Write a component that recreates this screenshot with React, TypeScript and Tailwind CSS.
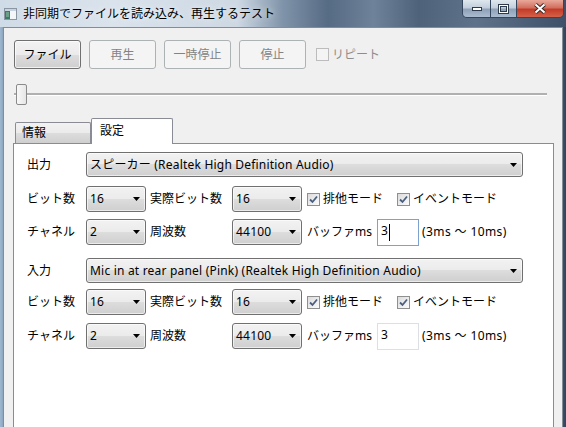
import React from "react";

function Arrow() {
  return (
    <svg width="7" height="4" viewBox="0 0 7 4">
      <path d="M0 0H7L3.5 4Z" fill="#000" />
    </svg>
  );
}

function Combo({ value, w, h = "h-[26px]" }: { value: string; w: string; h?: string }) {
  return (
    <div
      className={`${w} ${h} flex shrink-0 items-center justify-between rounded-[3px] border border-[#707070] bg-[linear-gradient(#f2f2f2,#ebebeb_50%,#dddddd_50%,#cfcfcf)] pl-[3px] pr-[5px] shadow-[inset_0_0_0_1px_rgba(255,255,255,0.6)]`}
    >
      <span className="whitespace-nowrap tracking-[0.2px]">{value}</span>
      <Arrow />
    </div>
  );
}

function Check({ label, checked, disabled }: { label: string; checked?: boolean; disabled?: boolean }) {
  return (
    <div className="flex items-center gap-[3px]">
      <div
        className={`flex h-[13px] w-[13px] items-center justify-center border ${
          disabled
            ? "border-[#bcbcbc] bg-[#f4f4f4]"
            : "border-[#8f8f8f] bg-[linear-gradient(135deg,#dcdcdc,#fbfbfb)]"
        }`}
      >
        {checked && (
          <svg width="11" height="11" viewBox="0 0 11 11">
            <path d="M2 5.5L4.5 8L9 2.5" fill="none" stroke="#4a5f80" strokeWidth="1.8" />
          </svg>
        )}
      </div>
      <span className={disabled ? "text-[#8d8d8d]" : ""}>{label}</span>
    </div>
  );
}

function Btn({ label, disabled }: { label: string; disabled?: boolean }) {
  return disabled ? (
    <div className="flex h-[29px] w-[67px] items-center justify-center rounded-[3px] border border-[#adb2b5] bg-[#f4f4f4] text-[#838383]">
      {label}
    </div>
  ) : (
    <div className="flex h-[29px] w-[67px] items-center justify-center rounded-[3px] border border-[#707070] bg-[linear-gradient(#f2f2f2,#ebebeb_50%,#dddddd_50%,#cfcfcf)] shadow-[inset_0_0_0_1px_rgba(255,255,255,0.7)]">
      {label}
    </div>
  );
}

function TextBox({ focused }: { focused?: boolean }) {
  return (
    <div
      className={`flex h-[27px] w-[42px] shrink-0 items-start border pl-[3px] pt-[3px] ${
        focused ? "border-[#7da2ce]" : "border-[#dcdfe3]"
      } bg-white`}
    >
      <span>3</span>
      {focused && <span className="ml-px mt-[1px] h-[17px] w-px bg-black" />}
    </div>
  );
}

function DeviceBlock({ title, device, top, rowB, rowC, focused }: { title: string; device: string; top: string; rowB: string; rowC: string; focused?: boolean }) {
  return (
    <>
      <div className={`${top} flex h-[25px] items-center`}>
        <span className="w-[59px]">{title}</span>
        <Combo value={device} w="w-[437px]" h="h-[25px]" />
      </div>
      <div className={`${rowB} flex h-[26px] items-center`}>
        <span className="w-[59px]">ビット数</span>
        <Combo value="16" w="w-[60px]" />
        <span className="ml-[4px] w-[82px]">実際ビット数</span>
        <Combo value="16" w="w-[70px]" />
        <div className="ml-[5px] w-[90px]">
          <Check label="排他モード" checked />
        </div>
        <Check label="イベントモード" checked />
      </div>
      <div className={`${rowC} flex h-[26px] items-center`}>
        <span className="w-[59px]">チャネル</span>
        <Combo value="2" w="w-[60px]" />
        <span className="ml-[4px] w-[82px]">周波数</span>
        <Combo value="44100" w="w-[70px]" />
        <span className="ml-[5px] w-[70px]">バッファms</span>
        <TextBox focused={focused} />
        <span className="ml-[3px] tracking-[0.4px]">(3ms ～ 10ms)</span>
      </div>
    </>
  );
}

export default function App() {
  return (
    <div className="flex h-[427px] w-[566px] flex-col overflow-hidden bg-[linear-gradient(90deg,#9fb8d2,#5d7591_2%,#5d7591_98%,#2f435a)] font-['Noto_Sans','Noto_Sans_CJK_JP',sans-serif] text-[12px] leading-[16px] text-black">
      {/* title bar */}
      <div className="flex h-[27px] shrink-0 items-start bg-[linear-gradient(90deg,#cfdbe6_0%,#dae3ec_20%,#cdd8e3_42%,#7f93a9_50%,#566b84_58%,#6e8299_66%,#4e627a_74%,#5e728a_84%,#3e5169_100%)]">
        <div className="flex h-[27px] items-center gap-[6px] pl-[4px]">
          <svg width="13" height="12" viewBox="0 0 13 12">
            <rect x="0.5" y="0.5" width="12" height="11" fill="#f4f6f8" stroke="#8a96a2" />
            <rect x="1" y="1" width="11" height="2" fill="#c7d3df" />
            <rect x="1" y="3" width="5" height="8" fill="#3b7a6a" />
            <rect x="2" y="4" width="3" height="5" fill="#6aa088" />
          </svg>
          <span className="[text-shadow:0_0_6px_rgba(255,255,255,0.9)]">非同期でファイルを読み込み、再生するテスト</span>
        </div>
        <div className="ml-auto mr-[2px] flex h-[18px] overflow-hidden rounded-b-[5px] border border-t-0 border-[#34465c]">
          <div className="flex w-[28px] items-center justify-center border-r border-[#34465c] bg-[linear-gradient(#dfe7ef,#c2cfdc_45%,#8ea2b8_55%,#a9bccf)]">
            <svg width="12" height="6" viewBox="0 0 12 6">
              <rect x="1.5" y="1.5" width="9" height="3" fill="#fff" stroke="#2c3a4c" />
            </svg>
          </div>
          <div className="flex w-[26px] items-center justify-center border-r border-[#34465c] bg-[linear-gradient(#dfe7ef,#c2cfdc_45%,#8ea2b8_55%,#a9bccf)]">
            <svg width="11" height="10" viewBox="0 0 11 10">
              <rect x="1.5" y="1.5" width="8" height="7" fill="none" stroke="#2c3a4c" strokeWidth="3" />
              <rect x="1.5" y="1.5" width="8" height="7" fill="none" stroke="#fff" strokeWidth="1" />
            </svg>
          </div>
          <div className="flex w-[46px] items-center justify-center bg-[linear-gradient(#e9a899,#d27060_45%,#c23c26_55%,#d6604a)]">
            <svg width="14" height="11" viewBox="0 0 14 11">
              <path d="M2.5 1.5L11.5 9.5M11.5 1.5L2.5 9.5" stroke="#3a2a28" strokeWidth="4" />
              <path d="M2.5 1.5L11.5 9.5M11.5 1.5L2.5 9.5" stroke="#fff" strokeWidth="2" />
            </svg>
          </div>
        </div>
      </div>

      {/* client */}
      <div className="flex min-h-0 flex-1 px-[3px]">
        <div className="flex flex-1 flex-col border border-b-0 border-[#838c97] bg-[#f0f0f0] pl-[9px] pr-[8px] pt-[12px]">
          <div className="ml-px flex h-[29px] items-center gap-[8px]">
            <Btn label="ファイル" />
            <Btn label="再生" disabled />
            <Btn label="一時停止" disabled />
            <Btn label="停止" disabled />
            <div className="ml-[2px]">
              <Check label="リピート" disabled />
            </div>
          </div>

          {/* slider */}
          <div className="relative ml-px mr-[7px] mt-[14px] flex h-[22px] items-center">
            <div className="h-[3px] w-full border-t-2 border-b border-t-[#b0b0b0] border-b-white bg-[#e6e6e6]" />
            <div className="absolute left-[2px] top-[1px] h-[21px] w-[11px] rounded-[2px] border border-[#8a8a8a] bg-[linear-gradient(90deg,#f8f8f8,#e6e6e6)]" />
          </div>

          {/* tabs */}
          <div className="relative z-10 -mb-px mt-[13px] flex h-[26px] items-end pl-[2px]">
            <div className="mb-px flex h-[21px] w-[76px] items-center rounded-t-[2px] border border-b-0 border-[#898c95] bg-[linear-gradient(#f2f2f2,#ebebeb_50%,#dddddd_50%,#cfcfcf)] pl-[6px]">
              情報
            </div>
            <div className="flex h-[26px] w-[82px] items-center rounded-t-[2px] border border-b-0 border-[#898c95] bg-white pb-[2px] pl-[8px]">
              設定
            </div>
          </div>
          <div className="flex flex-1 flex-col border border-b-0 border-[#898c95] bg-white pl-[13px] pt-[8px]">
            <DeviceBlock
              title="出力"
              device="スピーカー (Realtek High Definition Audio)"
              top=""
              rowB="mt-[9px]"
              rowC="mt-[7px]"
              focused
            />
            <DeviceBlock
              title="入力"
              device="Mic in at rear panel (Pink) (Realtek High Definition Audio)"
              top="mt-[13px]"
              rowB="mt-[6px]"
              rowC="mt-[8px]"
            />
          </div>
        </div>
      </div>
    </div>
  );
}
